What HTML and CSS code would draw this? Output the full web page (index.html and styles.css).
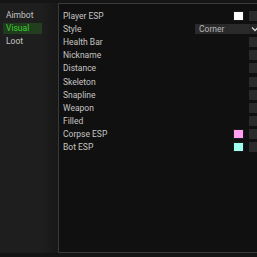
FILE: index.html
```html
<!DOCTYPE html>
<html lang="en">
<head>
<meta charset="UTF-8" />
<meta name="viewport" content="width=device-width, initial-scale=1" />
<title>Menu</title>
<link rel="stylesheet" href="styles.css">
</head>
<body>

<div class="topbar"></div>

<div class="main">
  <nav class="tabs">
    <div class="tab">Aimbot</div>
    <div class="tab active">Visual</div>
    <div class="tab">Loot</div>
  </nav>

  <section class="panel">
    <div class="row"><span class="label">Player ESP</span><span class="swatch white"></span><span class="check"></span></div>
    <div class="row"><span class="label">Style</span>
      <div class="combo"><span class="combo-text">Corner</span><span class="combo-arrow">
        <svg width="8" height="6" viewBox="0 0 8 6"><path d="M1 1.5 L4 4.5 L7 1.5" fill="none" stroke="#d0d0d0" stroke-width="1.3"/></svg>
      </span></div>
    </div>
    <div class="row"><span class="label">Health Bar</span><span class="check"></span></div>
    <div class="row"><span class="label">Nickname</span><span class="check"></span></div>
    <div class="row"><span class="label">Distance</span><span class="check"></span></div>
    <div class="row"><span class="label">Skeleton</span><span class="check"></span></div>
    <div class="row"><span class="label">Snapline</span><span class="check"></span></div>
    <div class="row"><span class="label">Weapon</span><span class="check"></span></div>
    <div class="row"><span class="label">Filled</span><span class="check"></span></div>
    <div class="row"><span class="label">Corpse ESP</span><span class="swatch pink"></span><span class="check"></span></div>
    <div class="row"><span class="label">Bot ESP</span><span class="swatch cyan"></span><span class="check"></span></div>
  </section>
</div>

</body>
</html>
```

FILE: styles.css
```css
html, body {
  margin: 0;
  padding: 0;
  width: 257px;
  height: 257px;
  overflow: hidden;
  background: #141414;
  font-family: Roboto, 'Noto Sans', sans-serif;
  font-size: 8.5px;
  color: #c4c4c4;
}
.topbar {
  height: 3px;
  background: #151515;
}
.main {
  display: flex;
  height: 250px;
  background: #1d1d1d;
}

/* left tabs */
.tabs {
  width: 58px;
  flex-shrink: 0;
  padding-top: 7px;
  display: flex;
  flex-direction: column;
  gap: 2px;
  background: linear-gradient(90deg, #1e1e1e 70%, #181818);
}
.tab {
  height: 11px;
  line-height: 11px;
  margin-left: 3px;
  width: 39px;
  padding-left: 3px;
  box-sizing: border-box;
  color: #c4c4c4;
}
.tab.active {
  background: linear-gradient(90deg, #1f3a1c, #243f20);
  color: #39d12f;
}

/* panel */
.panel {
  width: 207px;
  flex-shrink: 0;
  box-sizing: border-box;
  border: 1px solid #3a3a3a;
  background: #101010;
  padding: 5px 4px 0 4px;
}
.row {
  height: 13.2px;
  display: flex;
  align-items: center;
}
.label {
  flex: 1;
  color: #c4c4c4;
}
.check {
  width: 11px;
  height: 10px;
  background: #2a2a2a;
  margin-left: 5px;
}
.swatch {
  width: 11px;
  height: 10px;
  box-sizing: border-box;
  border: 1px solid #1a1a1a;
}
.swatch.white { background: #ffffff; }
.swatch.pink { background: #ff9ef2; }
.swatch.cyan { background: #9effef; }

.combo {
  width: 65px;
  height: 10px;
  display: flex;
  background: #2a2a2a;
}
.combo-text {
  flex: 1;
  padding-left: 4px;
  line-height: 10px;
  color: #b8b8b8;
}
.combo-arrow {
  width: 11px;
  display: flex;
  align-items: center;
  justify-content: center;
  background: #262626;
}
```
